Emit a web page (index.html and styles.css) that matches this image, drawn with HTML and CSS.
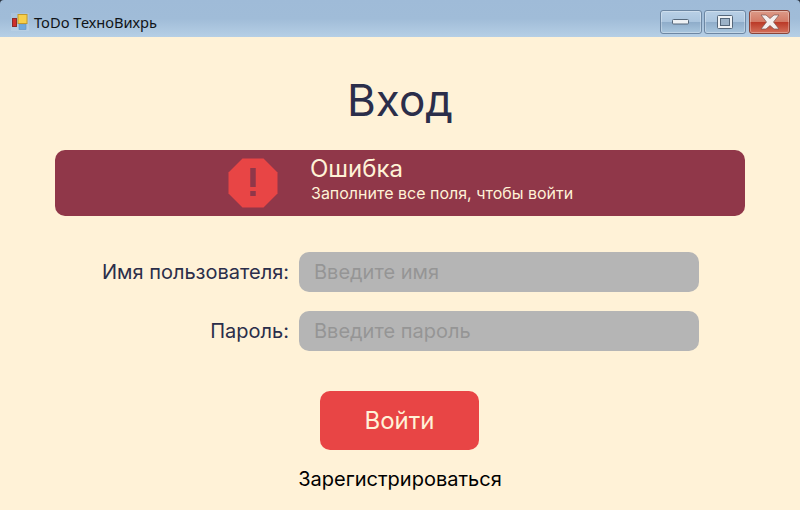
FILE: index.html
```html
<!DOCTYPE html>
<html lang="ru">
<head>
  <meta charset="UTF-8">
  <title>ToDo ТехноВихрь</title>
  <meta name="viewport" content="width=device-width, initial-scale=1">
  <link rel="stylesheet" href="styles.css">
</head>
<body>
  <div class="window">
    <div class="titlebar">
      <svg class="app-icon" width="18" height="18" viewBox="0 0 18 18">
        <rect width="18" height="18" fill="#fff" opacity=".12"/>
        <rect x="1.500" y="5.500" width="4" height="8" fill="#cf2f2a" stroke="#8a2a2a"/>
        <rect x="7" y="1.500" width="9" height="9" fill="#f7cf4a" stroke="#c39a2a"/>
        <rect x="8" y="11.500" width="7" height="5" fill="#6fa8dc" stroke="#5c92c4" stroke-width=".6"/>
      </svg>
      <span class="app-name">ToDo ТехноВихрь</span>
      <div class="win-buttons">
        <div class="win-btn">
          <svg width="18" height="8" viewBox="0 0 18 8"><rect x=".5" y="1.500" width="16" height="4.500" rx="1" fill="#eef1f4" stroke="#55677a"/></svg>
        </div>
        <div class="win-btn">
          <svg width="18" height="14" viewBox="0 0 18 14"><rect x="1.500" y=".5" width="15" height="13" rx="1" fill="#eef1f4" stroke="#55677a"/><rect x="4.500" y="3.500" width="9" height="7" fill="#9db3c8" stroke="#55677a"/></svg>
        </div>
        <div class="win-btn win-close">
          <svg width="22" height="16" viewBox="0 0 22 16"><path d="M2 1h5l4 3.500L15 1h5l-5.500 7 5.500 7h-5l-4-3.500L7 15H2l5.500-7z" fill="#f4eeee" stroke="#7a5450" stroke-width=".7"/></svg>
        </div>
      </div>
    </div>

    <div class="content">
      <h1>Вход</h1>

      <div class="alert">
        <svg class="alert-icon" width="50" height="50" viewBox="0 0 50 50">
          <polygon points="14.500,.5 35.500,.5 49.500,14.500 49.500,35.500 35.500,49.500 14.500,49.500 .5,35.500 .5,14.500" fill="#e84545"/>
          <rect x="22.250" y="10" width="5.500" height="19" fill="#903749"/>
          <rect x="22.250" y="33" width="5.500" height="5" fill="#903749"/>
        </svg>
        <div class="alert-text">
          <div class="alert-title">Ошибка</div>
          <div class="alert-msg">Заполните все поля, чтобы войти</div>
        </div>
      </div>

      <div class="form">
        <div class="row">
          <label>Имя пользователя:</label>
          <div class="field">Введите имя</div>
        </div>
        <div class="row">
          <label>Пароль:</label>
          <div class="field">Введите пароль</div>
        </div>
      </div>

      <div class="submit">Войти</div>
      <div class="register">Зарегистрироваться</div>
    </div>
  </div>
</body>
</html>
```

FILE: styles.css
```css
html, body {
  margin: 0;
  height: 100%;
  overflow: hidden;
}
body {
  font-family: 'Inter', 'Noto Sans', sans-serif;
}
.window {
  width: 800px; height: 510px;
  display: flex; flex-direction: column;
  background: #2a3340;
}
.titlebar {
  height: 37px; flex: none;
  display: flex; align-items: center;
  padding: 6px 10px 0 11px;
  box-sizing: border-box;
  border-radius: 4px 4px 0 0;
  background: linear-gradient(180deg, #9fbbd8 0%, #a0bcd8 50%, #b6cfe5 100%);
}
.app-icon { margin-right: 5px; }
.app-name {
  font-family: 'Noto Sans', sans-serif;
  font-size: 14.670px; color: #101418;
}
.win-buttons {
  margin-left: auto; margin-top: 1px;
  display: flex; gap: 2px;
}
.win-btn {
  width: 42px; height: 24px;
  box-sizing: border-box;
  display: flex; align-items: center; justify-content: center;
  border: 1px solid #6d87a3; border-radius: 3px;
  background: linear-gradient(180deg, #b9d0e6 0%, #abc5de 48%, #8fadca 52%, #a9c6de 100%);
  box-shadow: inset 0 0 0 1px rgba(255,255,255,0.3);
}
.win-close {
  width: 41px; margin-left: 1px;
  border-color: #8a4438;
  background: linear-gradient(180deg, #dc9a88 0%, #d37a66 48%, #bb3a28 52%, #d4705a 100%);
}
.content {
  flex: 1;
  display: flex; flex-direction: column; align-items: center;
  padding: 0 55px;
  background: #fff2d7;
}
h1 {
  margin: 33px 0 0;
  font-size: 44px; font-weight: 400; line-height: 60px;
  color: #2b2e4a;
}
.alert {
  width: 100%; height: 66px;
  margin-top: 20px;
  box-sizing: border-box;
  padding-left: 173px;
  display: flex; align-items: center;
  background: #903749; border-radius: 10px;
  color: #fff2d7;
}
.alert-icon { margin-right: 33px; }
.alert-text { padding-bottom: 9px; }
.alert-title { font-size: 24px; line-height: 29px; margin-left: -1px; }
.alert-msg { font-size: 16px; line-height: 21px; }
.form {
  align-self: flex-start;
  margin-top: 36px;
  display: flex; flex-direction: column; gap: 19px;
}
.row {
  display: flex; align-items: center; gap: 10px;
}
.row label {
  width: 234px; text-align: right;
  font-size: 20px; color: #2b2e4a;
}
.field {
  width: 400px; height: 40px;
  box-sizing: border-box;
  padding-left: 15px;
  display: flex; align-items: center;
  background: #b5b5b5; border-radius: 10px;
  font-size: 20px; color: #959595;
}
.submit {
  margin-top: 40px; margin-left: -1px;
  width: 159px; height: 59px;
  display: flex; align-items: center; justify-content: center;
  background: #e84545; border-radius: 10px;
  font-size: 24px; color: #fff2d7;
}
.register {
  margin-top: 17px;
  font-size: 20px; line-height: 24px; color: #000;
}
```
